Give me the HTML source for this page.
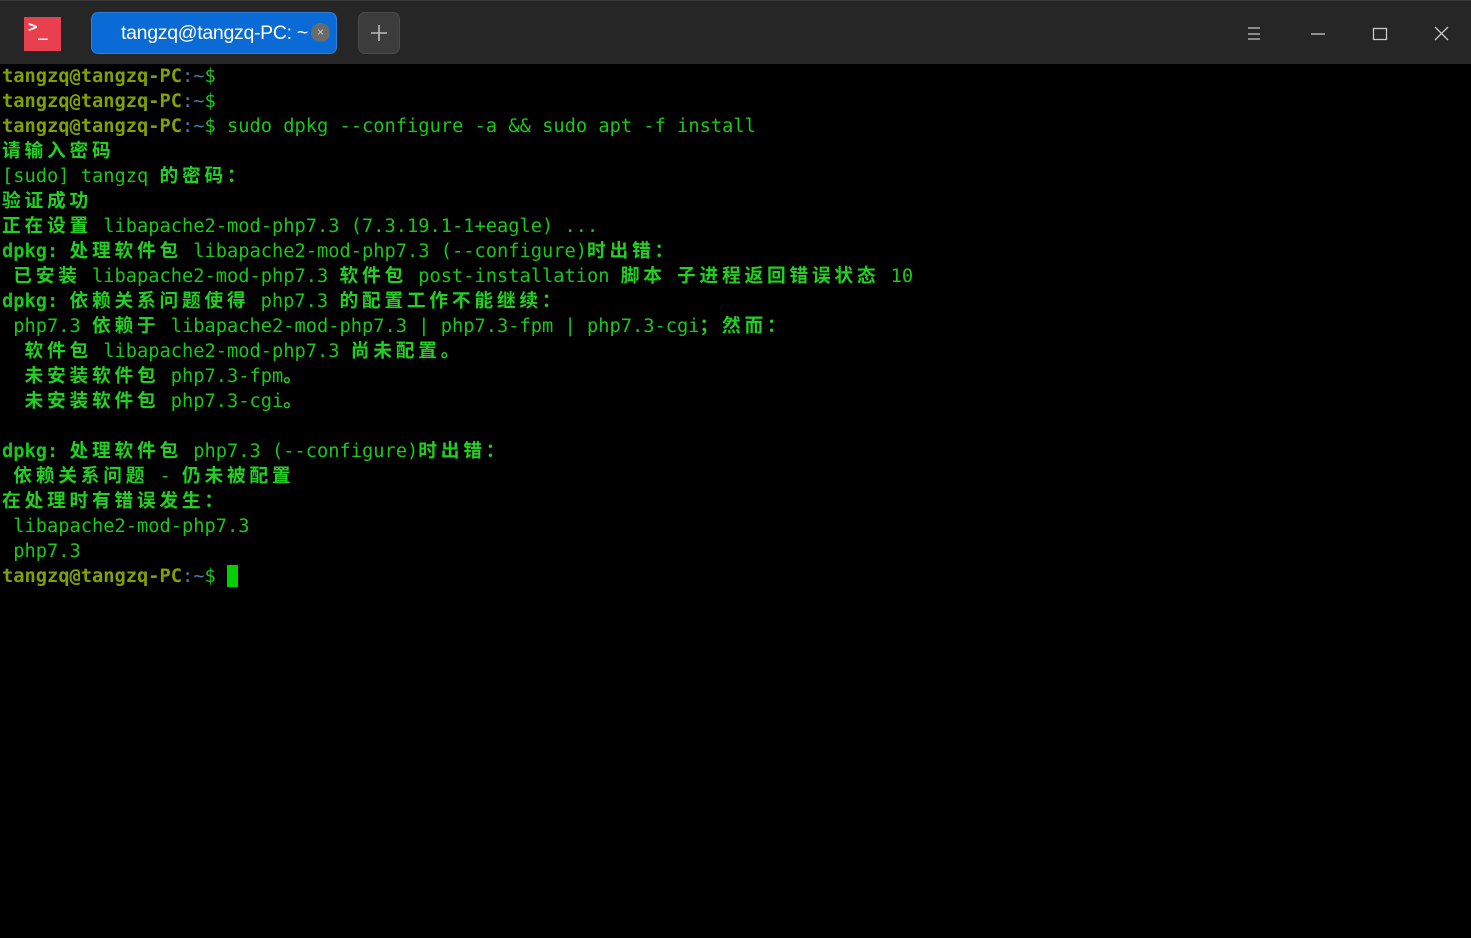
<!DOCTYPE html>
<html><head><meta charset="utf-8"><style>
html,body{margin:0;padding:0;background:#000;width:1471px;height:938px;overflow:hidden}
.tb{position:absolute;left:0;top:0;width:1471px;height:64px;background:#262626;border-top:1px solid #3a3a3a;box-sizing:border-box}
.logo{position:absolute;left:24px;top:16px;width:37px;height:34px;background:#e8404f;color:#fff;font:bold 16px "DejaVu Sans Mono",monospace;}
.tab{position:absolute;left:91px;top:11px;width:246px;height:42px;background:#0a6ad6;border-radius:7px;color:#fff;font:19.5px "Liberation Sans","DejaVu Sans",sans-serif;line-height:40px;box-sizing:border-box;padding-left:29px;border:1px solid #2a7ee0;white-space:nowrap;letter-spacing:-0.3px}
.x{position:absolute;left:219px;top:10px;width:19px;height:19px;border-radius:50%;background:#6b6b6b;color:#ccc;font-size:12px;line-height:19px;text-align:center;letter-spacing:0}
.plus{position:absolute;left:358px;top:11px;width:42px;height:42px;background:#3c3c3c;border-radius:7px;border:1px solid #4a4a4a;box-sizing:border-box}
.term{position:absolute;left:2px;top:64px;font:18.7px "DejaVu Sans Mono","Noto Sans CJK SC",monospace;color:#19c819}
.term div{height:25px;line-height:25px;white-space:pre;overflow:visible}
b{font-weight:bold}
.c{letter-spacing:3.8px;font-weight:bold;font-family:"Noto Sans CJK SC",sans-serif;line-height:25px;display:inline-block;height:25px;vertical-align:top;color:#22d022;position:relative;top:-2px}
.p{color:#80a000;font-weight:bold}.t{color:#4a78a8}.d{color:#19c819}
.cur{display:inline-block;width:11px;height:22px;background:#00d000;vertical-align:-5px}
</style></head><body>
<div class="tb">
<div class="logo"><span style="position:absolute;left:4px;top:0px">&gt;</span><span style="position:absolute;left:14px;top:4px">_</span></div>
<div class="tab">tangzq@tangzq-PC: ~<div class="x">×</div></div>
<div class="plus"><svg width="40" height="40" style="position:absolute;left:0;top:0"><path d="M20 12v16M12 20h16" stroke="#bbb" stroke-width="1.6"/></svg></div>
<svg width="251" height="64" style="position:absolute;left:1220px;top:0" fill="none" stroke="#c8c8c8" stroke-width="1.3">
<path d="M28 27h12M28 33h12M28 38h12"/><path d="M91 33h14"/><rect x="153.5" y="27.5" width="13" height="11"/><path d="M215 26l13 13M228 26l-13 13"/></svg>
</div>
<div class="term">
<div><span class="p">tangzq@tangzq-PC</span><span class="t">:~</span><span class="d">$</span></div>
<div><span class="p">tangzq@tangzq-PC</span><span class="t">:~</span><span class="d">$</span></div>
<div><span class="p">tangzq@tangzq-PC</span><span class="t">:~</span><span class="d">$</span> sudo dpkg --configure -a &amp;&amp; sudo apt -f install</div>
<div><span class="c">请输入密码</span></div>
<div>[sudo] tangzq <span class="c">的密码：</span></div>
<div><span class="c">验证成功</span></div>
<div><span class="c">正在设置</span> libapache2-mod-php7.3 (7.3.19.1-1+eagle) ...</div>
<div><b>dpkg: </b><span class="c">处理软件包</span> libapache2-mod-php7.3 (--configure)<span class="c">时出错：</span></div>
<div> <span class="c">已安装</span> libapache2-mod-php7.3 <span class="c">软件包</span> post-installation <span class="c">脚本</span> <span class="c">子进程返回错误状态</span> 10</div>
<div><b>dpkg: </b><span class="c">依赖关系问题使得</span> php7.3 <span class="c">的配置工作不能继续：</span></div>
<div> php7.3 <span class="c">依赖于</span> libapache2-mod-php7.3 | php7.3-fpm | php7.3-cgi<span class="c">；然而：</span></div>
<div>  <span class="c">软件包</span> libapache2-mod-php7.3 <span class="c">尚未配置。</span></div>
<div>  <span class="c">未安装软件包</span> php7.3-fpm<span class="c">。</span></div>
<div>  <span class="c">未安装软件包</span> php7.3-cgi<span class="c">。</span></div>
<div></div>
<div><b>dpkg: </b><span class="c">处理软件包</span> php7.3 (--configure)<span class="c">时出错：</span></div>
<div> <span class="c">依赖关系问题</span> - <span class="c">仍未被配置</span></div>
<div><span class="c">在处理时有错误发生：</span></div>
<div> libapache2-mod-php7.3</div>
<div> php7.3</div>
<div><span class="p">tangzq@tangzq-PC</span><span class="t">:~</span><span class="d">$</span> <span class="cur"></span></div>
</div>
</body></html>
